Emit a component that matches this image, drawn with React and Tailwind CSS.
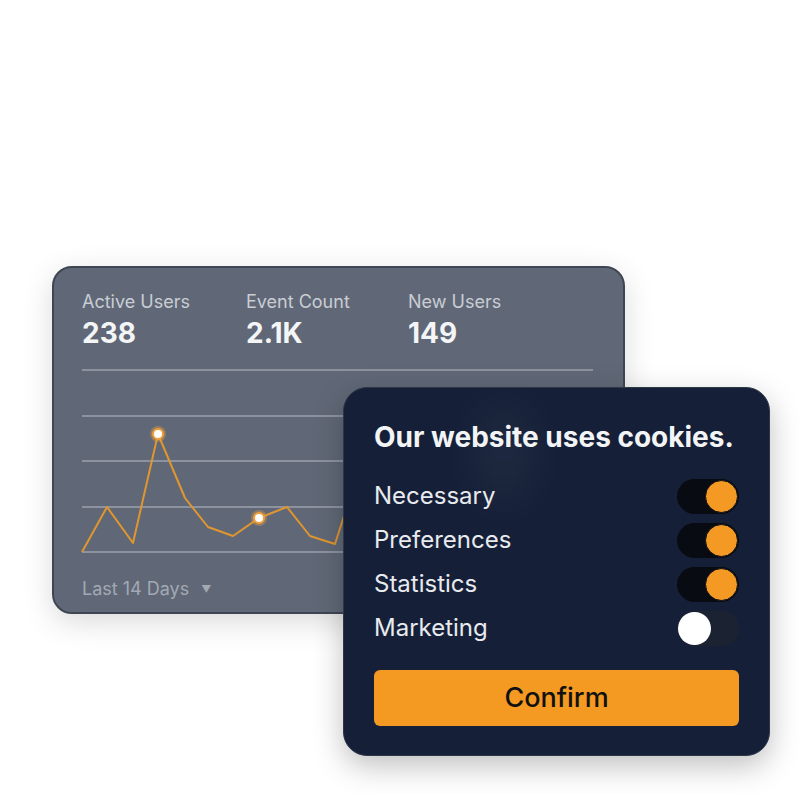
import React from 'react';

const stats = [
  { label: 'Active Users', value: '238', w: 'w-[164px]' },
  { label: 'Event Count', value: '2.1K', w: 'w-[162px]' },
  { label: 'New Users', value: '149', w: 'w-[162px]' },
];

const prefs = [
  { label: 'Necessary', on: true },
  { label: 'Preferences', on: true },
  { label: 'Statistics', on: true },
  { label: 'Marketing', on: false },
];

const points = '0,186 25,141 51,177 76,68 103,132 126,161 151,170 177,152 205,141 228,170 253,178 262,150 290,120';

const Toggle = ({ on }) => (
  <div
    className={`w-[62px] h-[35px] rounded-full flex items-center p-[1px] ${
      on ? 'bg-[#080b12] justify-end' : 'bg-[#1b2333] justify-start'
    }`}
  >
    <div
      className={`w-[33px] h-[33px] rounded-full ${
        on ? 'bg-[#f49a24] border-[1.5px] border-[#0b0f17]' : 'bg-white'
      }`}
    />
  </div>
);

const App = () => {
  return (
    <div className="relative w-[804px] h-[795px] bg-white overflow-hidden font-['Inter',sans-serif]">
      <div className="pt-[266px] pl-[52px]">
        {/* Analytics card */}
        <div className="w-[573px] h-[348px] rounded-[20px] border-2 border-[#3f4653] bg-[#606877] shadow-[0_8px_30px_rgba(0,0,0,0.15)] px-[28px] pt-[24px]">
          <div className="flex">
            {stats.map((s) => (
              <div key={s.label} className={s.w}>
                <div className="text-[18px] leading-[20px] text-[#c9cdd4]">{s.label}</div>
                <div className="mt-[5px] text-[28px] leading-[32px] font-bold text-[#f4f5f7]">{s.value}</div>
              </div>
            ))}
          </div>

          <svg width="513" height="190" viewBox="0 0 513 190" className="mt-[17px] block overflow-visible">
            {[4, 50, 95, 141, 186].map((y) => (
              <line key={y} x1="0" x2="511" y1={y} y2={y} stroke="#8d939e" strokeWidth="2" />
            ))}
            <polyline points={points} fill="none" stroke="#e0962f" strokeWidth="2" strokeLinejoin="round" />
            {[[76, 68], [177, 152]].map(([x, y]) => (
              <g key={x}>
                <circle cx={x} cy={y} r="8" fill="#f3a33a" opacity="0.35" />
                <circle cx={x} cy={y} r="5" fill="#fff" stroke="#f0a03a" strokeWidth="2" />
              </g>
            ))}
          </svg>

          <div className="mt-[23px] flex items-center gap-[12px] text-[18px] leading-[20px] text-[#a3a9b3]">
            <span>Last 14 Days</span>
            <span className="text-[10px]">▼</span>
          </div>
        </div>
      </div>

      {/* Cookie consent card */}
      <div className="absolute left-[343px] top-[387px] w-[427px] h-[369px] rounded-[24px] border border-[#2e3747] bg-[#152038] shadow-[0_10px_30px_rgba(0,0,0,0.25)] px-[30px] pt-[33px] overflow-hidden">
        <div className="absolute left-[135px] top-[15px] w-[50px] h-[100px] rounded-full bg-white/5 blur-xl" />
        <div className="relative text-[28px] leading-[32px] font-bold text-[#f3f4f6] whitespace-nowrap">Our website uses cookies.</div>

        <div className="relative mt-[21px]">
          {prefs.map((p) => (
            <div key={p.label} className="h-[44px] flex items-center justify-between">
              <span className="text-[24px] text-[#e8eaee]">{p.label}</span>
              <Toggle on={p.on} />
            </div>
          ))}
        </div>

        <button className="relative mt-[20px] w-full h-[56px] rounded-[6px] bg-[#f49a22] text-[27px] font-medium text-[#111]">
          Confirm
        </button>
      </div>
    </div>
  );
};

export default App;
